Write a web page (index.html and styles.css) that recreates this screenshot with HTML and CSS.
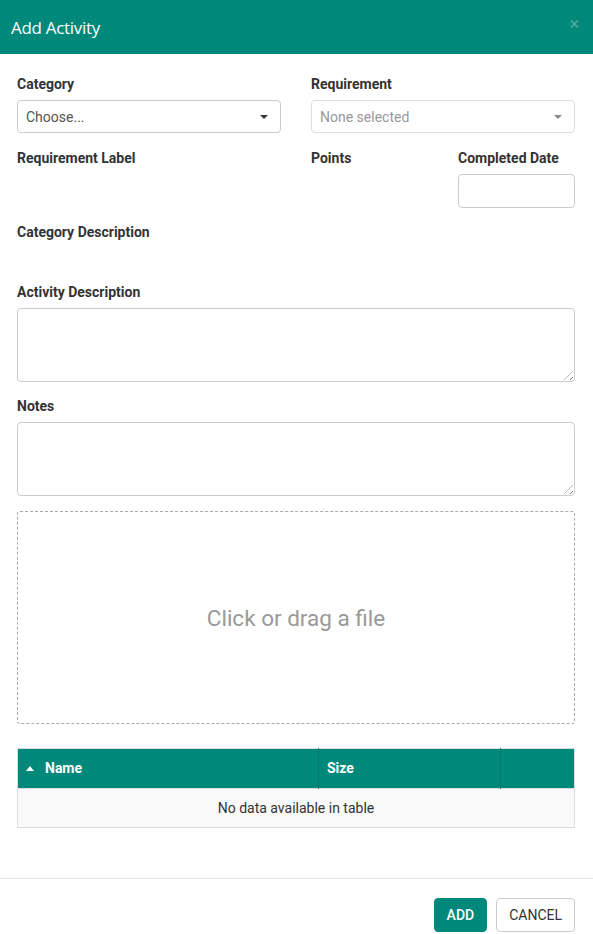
FILE: index.html
```html
<!DOCTYPE html>
<html>
<head>
<meta charset="utf-8">
<link rel="stylesheet" href="styles.css">
</head>
<body>
<div class="modal">
  <div class="modal-header">
    <h4 class="modal-title">Add Activity</h4>
    <span class="close">×</span>
  </div>
  <div class="modal-body">
    <div class="grid">
      <div class="field span2">
        <label>Category</label>
        <div class="select"><span>Choose...</span><span class="caret"></span></div>
      </div>
      <div class="field span2">
        <label>Requirement</label>
        <div class="select disabled"><span>None selected</span><span class="caret light"></span></div>
      </div>
      <div class="field span2"><label>Requirement Label</label></div>
      <div class="field"><label>Points</label></div>
      <div class="field date">
        <label>Completed Date</label>
        <div class="input"></div>
      </div>
      <div class="field span4 desc"><label>Category Description</label></div>
      <div class="field span4 area">
        <label>Activity Description</label>
        <div class="textarea"><span class="grip"></span></div>
      </div>
      <div class="field span4 area last">
        <label>Notes</label>
        <div class="textarea"><span class="grip"></span></div>
      </div>
    </div>
    <div class="dropzone">Click or drag a file</div>
    <table class="files">
      <thead>
        <tr><th class="c1"><span class="sort"></span>Name</th><th class="c2">Size</th><th class="c3"></th></tr>
      </thead>
      <tbody>
        <tr><td colspan="3">No data available in table</td></tr>
      </tbody>
    </table>
  </div>
  <div class="modal-footer">
    <button class="btn primary">ADD</button>
    <button class="btn">CANCEL</button>
  </div>
</div>
</body>
</html>
```
FILE: styles.css
```css
* { box-sizing: border-box; }
html, body { margin: 0; padding: 0; background: #fff; }
body { font-family: Roboto, "Liberation Sans", sans-serif; color: #333; width: 593px; height: 934px; overflow: hidden; }
.modal { display: flex; flex-direction: column; height: 934px; }
.modal-header { background: #00897b; height: 54px; display: flex; align-items: center; justify-content: space-between; padding: 0 14px 0 11px; }
.modal-title { margin: 0; color: #fff; font-family: "Open Sans", "Noto Sans", sans-serif; font-weight: 400; font-size: 17px; letter-spacing: -0.3px; }
.close { color: #4fa89d; font-size: 18px; line-height: 1; margin-top: -6px; }
.modal-body { padding: 22px 18px 0 17px; flex: 1; }
.grid { display: grid; grid-template-columns: repeat(4, 117px); column-gap: 30px; }
.span2 { grid-column: span 2; }
.span4 { grid-column: span 4; }
.field { display: flex; flex-direction: column; margin-bottom: 17px; }
.field.date { margin-bottom: 16px; }
.field.area { margin-bottom: 16px; }
.field.area.last { margin-bottom: 15px; }
.field label { font-weight: 700; font-size: 14px; line-height: 16px; margin-bottom: 8px; color: #333; }
.desc { min-height: 43px; }
.select { height: 33px; border: 1px solid #ccc; border-radius: 4px; display: flex; align-items: center; justify-content: space-between; padding: 0 12px 0 8px; font-size: 14px; color: #555; }
.select.disabled { color: #999; border-color: #ddd; }
.caret { width: 0; height: 0; border-left: 4px solid transparent; border-right: 4px solid transparent; border-top: 4px solid #333; }
.caret.light { border-top-color: #888; }
.input { height: 34px; border: 1px solid #ccc; border-radius: 4px; }
.textarea { height: 74px; border: 1px solid #ccc; border-radius: 4px; position: relative; }
.grip { position: absolute; right: 1px; bottom: 1px; width: 9px; height: 9px; background: repeating-linear-gradient(135deg, transparent 0 2px, #777 2px 3px, transparent 3px 4px); clip-path: polygon(100% 0, 100% 100%, 0 100%); }
.dropzone { height: 213px; border: 1px dashed #aaa; border-radius: 3px; display: flex; align-items: center; justify-content: center; font-size: 22.5px; color: #999; }
.files { width: 558px; border-collapse: collapse; margin-top: 24px; border: 1px solid #ddd; font-size: 14px; }
.files th { background: #00897b; color: #fff; font-weight: 700; text-align: left; height: 40px; padding: 0 8px 1px; border-right: 1px solid #007a6c; }
.files th.c1 { width: 301px; padding-left: 8px; }
.files th.c2 { width: 182px; }
.files th:last-child { border-right: none; }
.sort { display: inline-block; width: 0; height: 0; border-left: 4px solid transparent; border-right: 4px solid transparent; border-bottom: 5px solid #fff; margin-right: 11px; vertical-align: 2px; }
.files td { background: #f9f9f9; text-align: center; height: 39px; color: #333; border-top: 1px solid #ddd; }
.modal-footer { border-top: 1px solid #e5e5e5; height: 56px; display: flex; justify-content: flex-end; align-items: flex-start; gap: 9px; padding: 19px 18px 0 0; flex: none; margin-bottom: 0; }
.btn { height: 34px; border: 1px solid #ccc; border-radius: 4px; background: #fff; color: #333; font-family: Roboto, "Liberation Sans", sans-serif; font-size: 14px; padding: 0 12px; }
.btn.primary { background: #00897b; border-color: #00897b; color: #fff; font-weight: 500; }
```
